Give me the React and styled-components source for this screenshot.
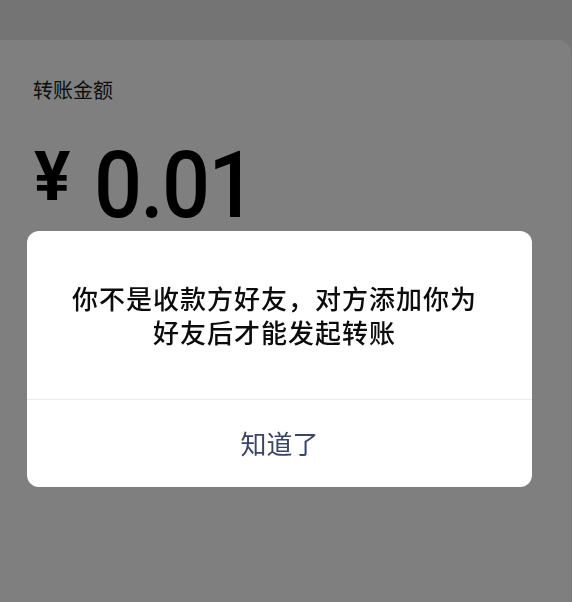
import React from 'react';
import styled, { createGlobalStyle } from 'styled-components';

const GlobalStyle = createGlobalStyle`
  html, body {
    margin: 0;
    padding: 0;
    background: #ececec;
    font-family: "Noto Sans CJK SC", "Noto Sans", sans-serif;
  }
`;

const Page = styled.div`
  width: 572px;
  height: 602px;
  display: flex;
  flex-direction: column;
  background: #ececec;
  overflow: hidden;
`;

const TopBar = styled.div`
  height: 40px;
  background: #e9e9e9;
`;

const Card = styled.div`
  flex: 1;
  margin-right: 1px;
  background: #ffffff;
  border-top-right-radius: 14px;
  padding: 36px 0 0 33px;
`;

const Label = styled.div`
  font-size: 20px;
  line-height: 28px;
  color: #1c1c1c;
`;

const AmountRow = styled.div`
  display: flex;
  align-items: flex-end;
  margin-top: 28px;
  height: 100px;
`;

const Currency = styled.span`
  font-family: "Roboto", "Liberation Sans", sans-serif;
  font-weight: 700;
  font-size: 68px;
  line-height: 1;
  margin-left: 1px;
  margin-bottom: 21px;
  color: #000;
`;

const Amount = styled.span`
  font-family: "Roboto", "Liberation Sans", sans-serif;
  font-weight: 500;
  font-size: 92px;
  line-height: 1;
  color: #000;
  margin-left: 24px;
  margin-bottom: 0;
  letter-spacing: -2px;
  transform: scaleX(0.92);
  transform-origin: left bottom;
`;

const Overlay = styled.div`
  position: fixed;
  inset: 0;
  background: rgba(0, 0, 0, 0.5);
  display: flex;
  justify-content: flex-start;
  align-items: flex-start;
  padding: 231px 0 0 27px;
`;

const Dialog = styled.div`
  width: 505px;
  background: #ffffff;
  border-radius: 12px;
  overflow: hidden;
  display: flex;
  flex-direction: column;
`;

const Message = styled.div`
  height: 169px;
  box-sizing: border-box;
  padding: 50px 50px 0 40px;
  text-align: center;
  font-size: 26px;
  font-weight: 500;
  line-height: 34px;
  letter-spacing: 1px;
  color: #0c0c0c;
  border-bottom: 1px solid #ebebeb;
`;

const Action = styled.button`
  height: 87px;
  border: none;
  background: transparent;
  font-family: "Noto Sans CJK SC", "Noto Sans", sans-serif;
  font-size: 26px;
  color: #3a4466;
  padding: 0 0 2px;
  cursor: pointer;
`;

export default function App() {
  return (
    <>
      <GlobalStyle />
      <Page>
        <TopBar />
        <Card>
          <Label>转账金额</Label>
          <AmountRow>
            <Currency>¥</Currency>
            <Amount>0.01</Amount>
          </AmountRow>
        </Card>
      </Page>
      <Overlay>
        <Dialog>
          <Message>
            你不是收款方好友，对方添加你为
            <br />
            好友后才能发起转账
          </Message>
          <Action>知道了</Action>
        </Dialog>
      </Overlay>
    </>
  );
}
